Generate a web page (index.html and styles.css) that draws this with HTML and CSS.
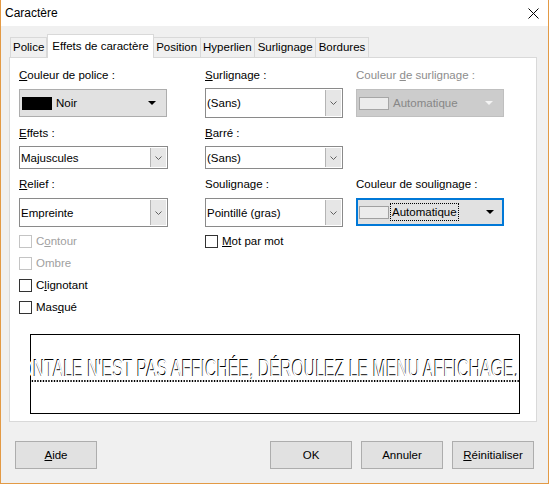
FILE: index.html
```html
<!DOCTYPE html>
<html lang="fr">
<head>
<meta charset="utf-8">
<title>Caractère</title>
<link rel="stylesheet" href="styles.css">
</head>
<body>
<div class="window">
  <div class="titlebar">
    <span class="title">Caractère</span>
    <svg class="close" width="11" height="11" viewBox="0 0 11 11"><path d="M0.5 0.5L10.5 10.5M10.5 0.5L0.5 10.5" stroke="#000" stroke-width="1" fill="none"/></svg>
  </div>
  <div class="tabs">
    <div class="tab">Police</div>
    <div class="tab active">Effets de caractère</div>
    <div class="tab">Position</div>
    <div class="tab">Hyperlien</div>
    <div class="tab">Surlignage</div>
    <div class="tab">Bordures</div>
  </div>
  <div class="panel">
    <div class="form">
      <div class="lbl"><u>C</u>ouleur de police :</div>
      <div class="lbl"><u>S</u>urlignage :</div>
      <div class="lbl disabled">Couleur <u>d</u>e surlignage :</div>

      <div class="cdrop">
        <span class="swatch black"></span><span class="ctext">Noir</span>
        <svg class="tri" width="8" height="4" viewBox="0 0 8 4"><path d="M0 0H8L4 4Z" fill="#000"/></svg>
      </div>
      <div class="sel tall narrow"><span class="stext">(Sans)</span><span class="sbtn"><svg width="7" height="4" viewBox="0 0 7 4"><path d="M0.5 0.5L3.5 3.5L6.5 0.5" stroke="#606060" fill="none"/></svg></span></div>
      <div class="cdrop off">
        <span class="swatch light"></span><span class="ctext">Automatique</span>
        <svg class="tri" width="8" height="4" viewBox="0 0 8 4"><path d="M0 0H8L4 4Z" fill="#f4f4f4"/></svg>
      </div>

      <div class="lbl"><u>E</u>ffets :</div>
      <div class="lbl"><u>B</u>arré :</div>
      <div></div>

      <div class="sel short wide"><span class="stext">Majuscules</span><span class="sbtn"><svg width="7" height="4" viewBox="0 0 7 4"><path d="M0.5 0.5L3.5 3.5L6.5 0.5" stroke="#606060" fill="none"/></svg></span></div>
      <div class="sel short narrow"><span class="stext">(Sans)</span><span class="sbtn"><svg width="7" height="4" viewBox="0 0 7 4"><path d="M0.5 0.5L3.5 3.5L6.5 0.5" stroke="#606060" fill="none"/></svg></span></div>
      <div></div>

      <div class="lbl"><u>R</u>elief :</div>
      <div class="lbl">Souli<u>g</u>nage :</div>
      <div class="lbl">Couleur de souli<u>g</u>nage :</div>

      <div class="sel mid wide"><span class="stext">Empreinte</span><span class="sbtn"><svg width="7" height="4" viewBox="0 0 7 4"><path d="M0.5 0.5L3.5 3.5L6.5 0.5" stroke="#606060" fill="none"/></svg></span></div>
      <div class="sel mid narrow"><span class="stext">Pointillé (gras)</span><span class="sbtn"><svg width="7" height="4" viewBox="0 0 7 4"><path d="M0.5 0.5L3.5 3.5L6.5 0.5" stroke="#606060" fill="none"/></svg></span></div>
      <div class="cdrop focus">
        <span class="swatch light"></span><span class="ctext dotted">Automatique</span>
        <svg class="tri" width="8" height="4" viewBox="0 0 8 4"><path d="M0 0H8L4 4Z" fill="#000"/></svg>
      </div>

      <div class="checks">
        <div class="chk disabled"><span class="box"></span><span>C<u>o</u>ntour</span></div>
        <div class="chk disabled"><span class="box"></span><span>Ombre</span></div>
        <div class="chk"><span class="box"></span><span>C<u>l</u>ignotant</span></div>
        <div class="chk"><span class="box"></span><span>Mas<u>q</u>ué</span></div>
      </div>
      <div class="checks">
        <div class="chk"><span class="box"></span><span><u>M</u>ot par mot</span></div>
      </div>
      <div></div>
    </div>
    <div class="preview"><span class="ptext">LA RÈGLE HORIZONTALE N'EST PAS AFFICHÉE, DÉROULEZ LE MENU AFFICHAGE.</span></div>
  </div>
  <div class="buttons">
    <button class="btn help"><u>A</u>ide</button>
    <button class="btn">OK</button>
    <button class="btn">Annuler</button>
    <button class="btn"><u>R</u>éinitialiser</button>
  </div>
</div>
</body>
</html>
```
FILE: styles.css
```css
* { box-sizing: border-box; }
html, body { margin: 0; padding: 0; }
body {
  font-family: "Liberation Sans", Arial, sans-serif;
  font-size: 11.5px;
  color: #000;
  background: #f0f0f0;
}
u { text-decoration: underline; text-underline-offset: 1px; }

.window {
  width: 549px;
  height: 484px;
  border: 1px solid #e39a45;
  border-top: none;
  background: #f0f0f0;
  display: flex;
  flex-direction: column;
}

.titlebar {
  height: 26px;
  background: #fff;
  display: flex;
  align-items: center;
  justify-content: space-between;
  padding: 0 9px 0 4px;
  font-size: 12px;
}
.close { display: block; margin-top: 1px; }

.tabs {
  display: flex;
  align-items: flex-end;
  height: 32px;
  padding-left: 9px;
  margin-bottom: -1px;
  position: relative;
  z-index: 1;
}
.tab {
  height: 20px;
  margin-bottom: 1px;
  line-height: 19px;
  padding: 0 2.5px;
  border: 1px solid #d9d9d9;
  border-bottom: none;
  border-left: none;
  background: #f0f0f0;
  white-space: nowrap;
}
.tab:first-child { border-left: 1px solid #d9d9d9; padding: 0 2px; }
.tab.active {
  height: 24px;
  margin-bottom: 0;
  padding: 2px 4px 0;
  background: #fff;
  border-left: 1px solid #d9d9d9;
}

.panel {
  margin-left: 8px;
  width: 528px;
  height: 365px;
  background: #fff;
  border: 1px solid #d9d9d9;
  padding: 2px 0 0 9px;
}

.form {
  display: grid;
  grid-template-columns: 186px 151px 1fr;
  align-items: start;
}
.lbl {
  height: 18px;
  line-height: 18px;
  margin-top: 6px;
  white-space: nowrap;
}
.lbl.disabled { color: #8d8d8d; }

.sel {
  display: flex;
  align-items: stretch;
  background: #fff;
  border: 1px solid #8a8a8a;
}
.sel.wide { width: 149px; }
.sel.narrow { width: 138px; }
.sel.tall { height: 30px; margin-top: 4px; }
.sel.short { height: 23px; margin-top: 4px; }
.sel.mid { height: 29px; margin-top: 5px; }
.stext {
  flex: 1;
  display: flex;
  align-items: center;
  padding-left: 1px;
  white-space: nowrap;
  overflow: hidden;
}
.sbtn {
  width: 16px;
  margin: 1px;
  background: #e6e6e6;
  border-left: 1px solid #b4b4b4;
  display: flex;
  align-items: center;
  justify-content: center;
}
.sbtn svg { display: block; }

.cdrop {
  width: 148px;
  height: 28px;
  margin-top: 5px;
  display: flex;
  align-items: center;
  padding-left: 2px;
  background: #e1e1e1;
  border: 1px solid #adadad;
}
.swatch {
  width: 30px;
  height: 13px;
  flex: none;
}
.swatch.black { background: #000; }
.swatch.light { background: #ececec; border: 1px solid #a0a0a0; }
.ctext { margin-left: 4px; white-space: nowrap; }
.tri { margin-left: auto; margin-right: 10px; display: block; }
.cdrop.off {
  background: #cccccc;
  border-color: #bfbfbf;
  color: #878787;
}
.cdrop.off .swatch { background: #ececec; border-color: #a6a6a6; }
.cdrop.focus {
  border: 2px solid #0078d7;
  padding-left: 1px;
}
.ctext.dotted {
  margin-left: 2px;
  padding: 2px 1px;
  outline: 1px dotted #000;
}
.cdrop.focus .tri { margin-right: 8px; }

.checks { margin-top: 3px; }
.chk {
  height: 22px;
  display: flex;
  align-items: center;
  white-space: nowrap;
}
.box {
  width: 13px;
  height: 13px;
  border: 1px solid #333;
  background: #fff;
  margin-right: 4px;
  flex: none;
}
.chk.disabled { color: #a0a0a0; }
.chk.disabled .box { border-color: #c4c4c4; }

.preview {
  margin: 16px 0 0 11px;
  width: 490px;
  height: 80px;
  border: 1px solid #000;
  background: #fff;
  display: flex;
  justify-content: flex-end;
  align-items: flex-start;
  clip-path: inset(0);
  padding-top: 23px;
}
.ptext {
  flex: none;
  white-space: nowrap;
  font-size: 23px;
  line-height: 22px;
  height: 24px;
  color: #fff;
  text-shadow: -1px -1px 0 #000;
  border-bottom: 2px dotted #000;
  transform: scaleX(0.69);
  transform-origin: right center;
}

.buttons {
  margin-top: 19px;
  padding: 0 14px;
  display: flex;
  gap: 9px;
}
.btn {
  width: 82px;
  height: 28px;
  font-family: inherit;
  font-size: 11.5px;
  color: #000;
  background: #e1e1e1;
  border: 1px solid #adadad;
  padding: 0;
}
.btn.help { margin-right: auto; }
```
